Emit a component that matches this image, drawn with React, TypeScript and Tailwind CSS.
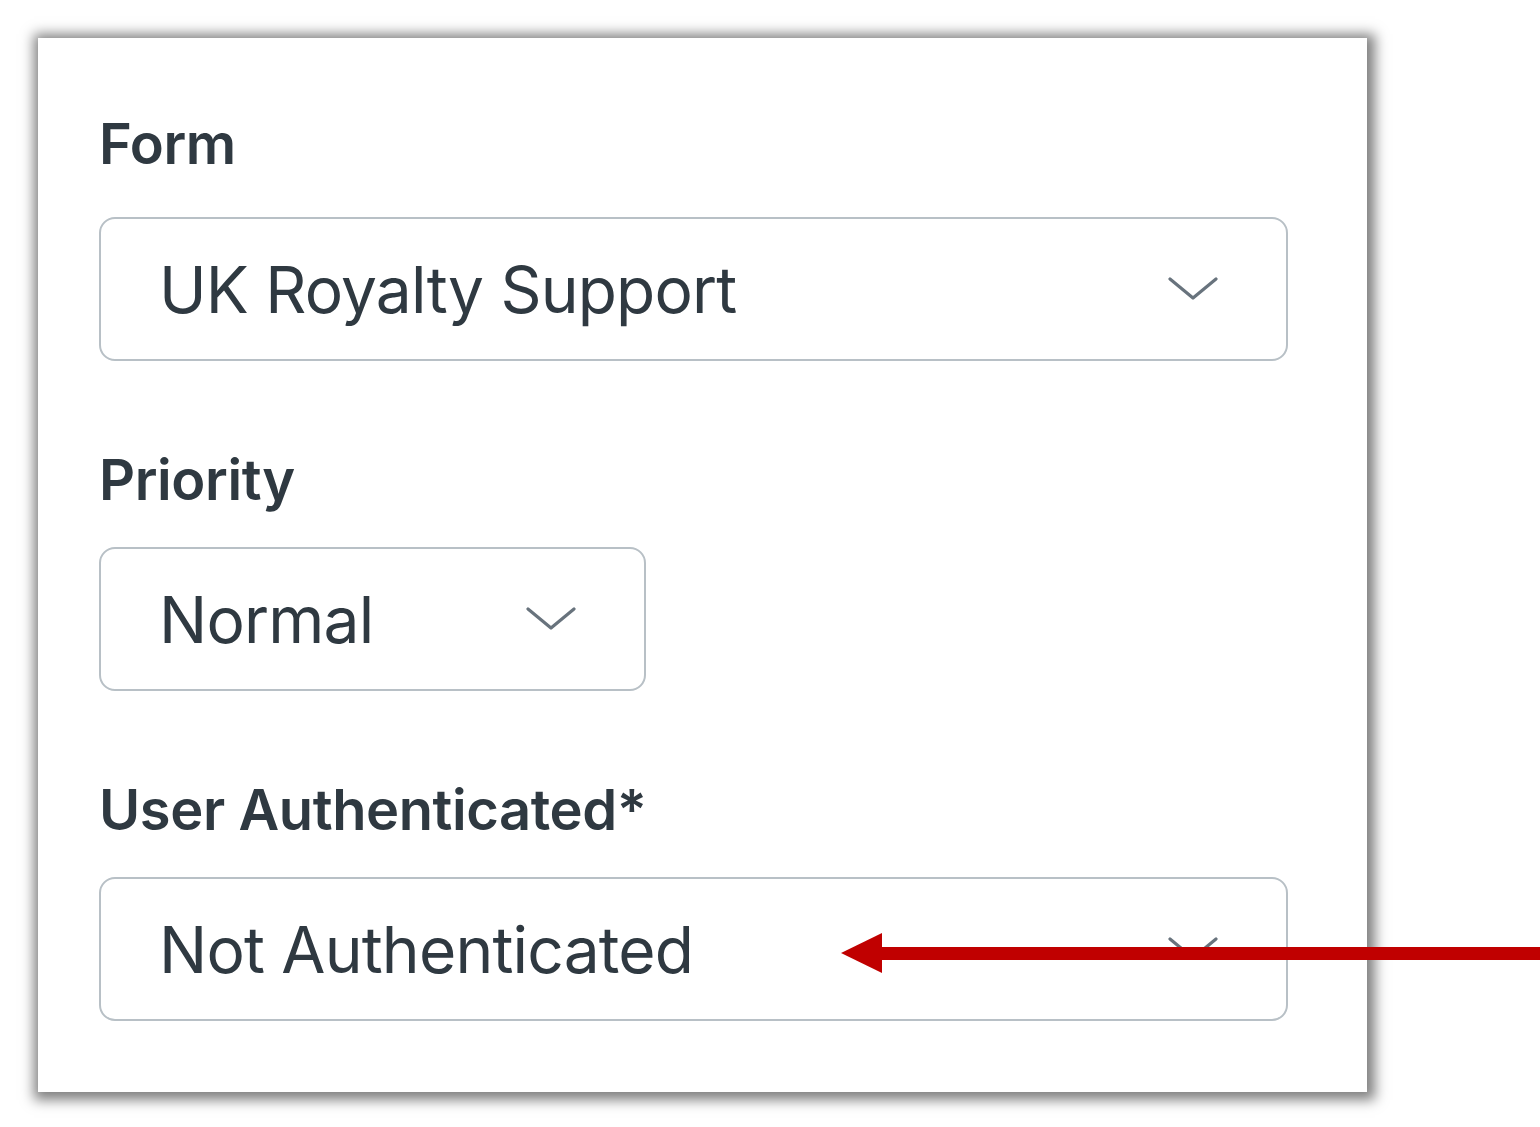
import { ReactNode } from 'react'

function Chevron() {
  return (
    <svg width="50" height="26" viewBox="0 0 50 26" className="shrink-0">
      <polyline
        points="2,3 25,22 48,3"
        fill="none"
        stroke="#68737d"
        strokeWidth="3.2"
        strokeLinejoin="round"
        strokeLinecap="round"
      />
    </svg>
  )
}

function Field({ label, children }: { label: string; children: ReactNode }) {
  return (
    <div className="flex flex-col">
      <label className="text-[56px] font-semibold leading-[69px] tracking-[-0.4px] text-[#2f3941]">
        {label}
      </label>
      {children}
    </div>
  )
}

function SelectBox({
  value,
  width,
  gap,
}: {
  value: string
  width: string
  gap: string
}) {
  return (
    <div
      className={`flex h-[144px] items-center justify-between rounded-[16px] border-[2.5px] border-[#b8c0c6] bg-white pl-[58px] pr-[68px] ${width} ${gap}`}
    >
      <span className="pt-[2px] text-[64px] leading-[80px] tracking-[-0.8px] text-[#2f3941]">
        {value}
      </span>
      <Chevron />
    </div>
  )
}

export default function App() {
  return (
    <div
      className="relative h-[1127px] w-[1540px] overflow-hidden bg-white pl-[38px] pt-[38px]"
      style={{ fontFamily: 'Inter, "Noto Sans", sans-serif' }}
    >
      <div className="flex h-[1054px] w-[1329px] flex-col gap-[85px] bg-white pl-[61px] pt-[72px] shadow-[2px_2px_12px_6px_rgba(0,0,0,0.5)]">
        <Field label="Form">
          <SelectBox value="UK Royalty Support" width="w-[1189px]" gap="mt-[38px]" />
        </Field>
        <Field label="Priority">
          <SelectBox value="Normal" width="w-[547px]" gap="mt-[32px]" />
        </Field>
        <Field label="User Authenticated*">
          <SelectBox value="Not Authenticated" width="w-[1189px]" gap="mt-[32px]" />
        </Field>
      </div>

      {/* red annotation arrow */}
      <svg
        width="700"
        height="44"
        viewBox="0 0 700 44"
        className="absolute left-[840px] top-[931px]"
      >
        <rect x="38" y="16" width="662" height="13" fill="#c00000" />
        <polygon points="1,22 42,2 42,42" fill="#c00000" />
      </svg>
    </div>
  )
}
